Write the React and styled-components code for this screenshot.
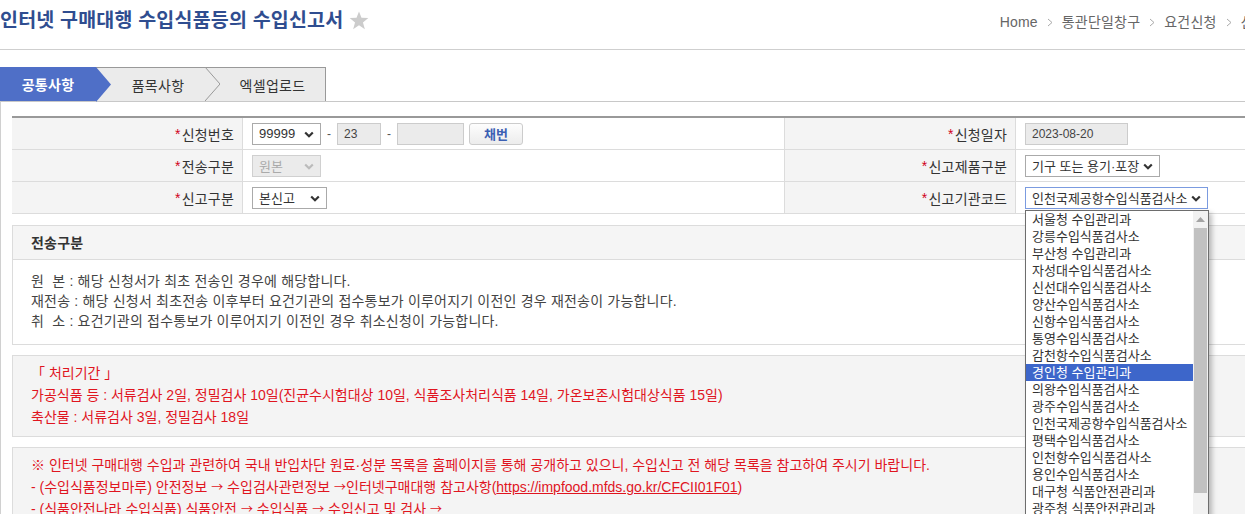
import React from "react";
import styled, { createGlobalStyle } from "styled-components";

const GlobalStyle = createGlobalStyle`
  html, body { margin: 0; padding: 0; background: #fff; overflow: hidden; }
  body {
    font-family: "Liberation Sans", "Noto Sans CJK KR", sans-serif;
    font-size: 14px;
    color: #333;
  }
  * { box-sizing: border-box; }
`;

const Page = styled.div`
  width: 1306px;
`;

const Header = styled.header`
  display: flex;
  justify-content: space-between;
  align-items: flex-start;
  height: 50px;
  border-bottom: 1px solid #cfcfcf;
`;

const Title = styled.h1`
  display: flex;
  align-items: center;
  gap: 6px;
  margin: 0;
  padding-top: 8px;
  font-size: 19.5px;
  line-height: 24px;
  font-weight: 700;
  letter-spacing: 0.2px;
  color: #2f4d90;
`;

const Breadcrumb = styled.nav`
  display: flex;
  align-items: center;
  gap: 9px;
  padding-top: 13px;
  line-height: 18px;
  font-size: 14px;
  letter-spacing: 0.2px;
  color: #666;
  white-space: nowrap;
`;

const TabBar = styled.div`
  display: flex;
  margin-top: 17px;
  width: 326px;
  height: 34px;
  background: #ebebeb;
  border-top: 1px solid #999;
  border-right: 1px solid #999;
`;

const Tab = styled.div`
  position: relative;
  display: flex;
  align-items: center;
  justify-content: center;
  width: ${(p) => p.$w}px;
  margin-top: ${(p) => (p.$active ? "-1px" : "0")};
  padding-left: ${(p) => p.$pl || 0}px;
  background: ${(p) => (p.$active ? "#4f6fc7" : "transparent")};
  color: ${(p) => (p.$active ? "#fff" : "#333")};
  font-weight: ${(p) => (p.$active ? 700 : 400)};
  font-size: 14px;
  letter-spacing: 0.3px;
`;

const TabArrow = styled.svg`
  position: absolute;
  top: ${(p) => (p.$active ? "0" : "-1px")};
  right: -15px;
  width: 15px;
  height: ${(p) => (p.$active ? "35px" : "34px")};
  z-index: 1;
`;

const Panel = styled.section`
  border-top: 1px solid #c8c8c8;
  border-left: 1px solid #d0d0d0;
  padding: 14px 0 40px 11px;
`;

const FormGrid = styled.div`
  display: grid;
  grid-template-columns: 231px 542px 231px 1fr;
  grid-auto-rows: 32px;
  border-top: 2px solid #999;
`;

const LabelCell = styled.div`
  display: flex;
  align-items: center;
  justify-content: flex-end;
  padding-right: 8px;
  background: #f4f4f4;
  border-bottom: 1px solid #dcdcdc;
  border-right: 1px solid #dcdcdc;
  color: #333;
  font-size: 14px;
  letter-spacing: 0.2px;
`;

const Req = styled.span`
  color: #d0021b;
  margin-right: 1px;
`;

const ValueCell = styled.div`
  position: relative;
  display: flex;
  align-items: center;
  gap: 6px;
  padding-left: 9px;
  border-bottom: 1px solid #dcdcdc;
  border-right: ${(p) => (p.$divider ? "1px solid #dcdcdc" : "none")};
`;

const SelectBox = styled.div`
  position: relative;
  display: flex;
  align-items: center;
  width: ${(p) => p.$w}px;
  height: 22px;
  padding: 0 20px 0 6px;
  border: 1px solid ${(p) => (p.$focus ? "#7b9be0" : p.$disabled ? "#d0d0d0" : "#aaa")};
  background: ${(p) => (p.$disabled ? "#ebebeb" : "#fff")};
  color: ${(p) => (p.$disabled ? "#aaa" : "#333")};
  font-size: 13px;
  white-space: nowrap;
`;

const Caret = styled.svg`
  position: absolute;
  right: 6px;
  top: 7px;
  width: 10px;
  height: 7px;
`;

const TextInput = styled.div`
  display: flex;
  align-items: center;
  width: ${(p) => p.$w}px;
  height: 22px;
  padding: 0 6px;
  border: 1px solid #ccc;
  background: #ebebeb;
  color: #444;
  font-size: 12px;
`;

const Dash = styled.span`
  width: 4px;
  color: #555;
  font-size: 12px;
`;

const Button = styled.button`
  width: 54px;
  height: 22px;
  margin-left: -1px;
  border: 1px solid #ccc;
  border-radius: 3px;
  background: linear-gradient(#fdfdfd, #ececec);
  color: #3b5fb3;
  font-family: inherit;
  font-size: 13px;
  font-weight: 700;
  padding: 0;
`;

const DropList = styled.ul`
  position: absolute;
  top: 28px;
  left: 9px;
  width: 184px;
  margin: 0;
  padding: 0 15px 0 0;
  list-style: none;
  background: #fff;
  border: 1px solid #6d6d6d;
  box-shadow: 3px 3px 5px rgba(0, 0, 0, 0.25);
  z-index: 10;
`;

const DropItem = styled.li`
  height: 17px;
  line-height: 17px;
  padding-left: 6px;
  font-size: 13px;
  white-space: nowrap;
  overflow: hidden;
  background: ${(p) => (p.$sel ? "#3d66ca" : "transparent")};
  color: ${(p) => (p.$sel ? "#fff" : "#333")};
`;

const ScrollTrack = styled.div`
  position: absolute;
  top: 0;
  right: 0;
  bottom: 0;
  width: 15px;
  background: #f1f1f1;
`;

const ScrollThumb = styled.div`
  position: absolute;
  top: 17px;
  left: 1px;
  width: 13px;
  height: 265px;
  background: #c1c1c1;
`;

const ScrollUp = styled.svg`
  position: absolute;
  top: 6px;
  left: 3px;
  width: 9px;
  height: 5px;
`;

const InfoBox = styled.div`
  margin-top: ${(p) => (p.$gray ? "10px" : "11px")};
  border: 1px solid #dcdcdc;
  background: ${(p) => (p.$gray ? "#f4f4f4" : "#fff")};
  padding: ${(p) => (p.$gray ? "6px 18px 8px" : "0")};
  color: ${(p) => (p.$gray ? "#e0151f" : "#444")};
  line-height: ${(p) => (p.$gray ? "22px" : "20px")};
  font-size: 14px;
  letter-spacing: ${(p) => (p.$gray ? "0" : "0.2px")};
`;

const BoxHead = styled.div`
  height: 34px;
  line-height: 34px;
  padding-left: 18px;
  background: #f5f5f5;
  border-bottom: 1px solid #dcdcdc;
  color: #333;
  font-weight: 700;
`;

const BoxBody = styled.div`
  padding: 11px 18px 13px;
`;

const Line = styled.div`
  white-space: nowrap;
`;

const Arrow = styled.span`
  font-family: "Noto Sans CJK KR", sans-serif;
  font-size: 12px;
`;

const Link = styled.a`
  color: inherit;
  text-decoration: underline;
`;

const Chevron = () => (
  <svg width="6" height="9" viewBox="0 0 6 9">
    <polyline points="1,1 5,4.5 1,8" fill="none" stroke="#aaa" strokeWidth="1" />
  </svg>
);

const CaretIcon = ({ color = "#333" }) => (
  <Caret viewBox="0 0 10 7">
    <polyline points="1.2,1.5 5,5.2 8.8,1.5" fill="none" stroke={color} strokeWidth="2.2" />
  </Caret>
);

const Select = ({ w, children, disabled, focus }) => (
  <SelectBox $w={w} $disabled={disabled} $focus={focus}>
    {children}
    <CaretIcon color={disabled ? "#bbb" : "#333"} />
  </SelectBox>
);

const offices = [
  "서울청 수입관리과",
  "강릉수입식품검사소",
  "부산청 수입관리과",
  "자성대수입식품검사소",
  "신선대수입식품검사소",
  "양산수입식품검사소",
  "신항수입식품검사소",
  "통영수입식품검사소",
  "감천항수입식품검사소",
  "경인청 수입관리과",
  "의왕수입식품검사소",
  "광주수입식품검사소",
  "인천국제공항수입식품검사소",
  "평택수입식품검사소",
  "인천항수입식품검사소",
  "용인수입식품검사소",
  "대구청 식품안전관리과",
  "광주청 식품안전관리과",
  "대전청 식품안전관리과",
  "여수수입식품검사소",
];

export default function App() {
  return (
    <Page>
      <GlobalStyle />
      <Header>
        <Title>
          인터넷 구매대행 수입식품등의 수입신고서
          <svg width="20" height="19" viewBox="0 0 24 23">
            <polygon
              points="12,0.5 15,8.2 23.3,8.6 16.8,13.8 19.1,22 12,17.3 4.9,22 7.2,13.8 0.7,8.6 9,8.2"
              fill="#cccccc"
            />
          </svg>
        </Title>
        <Breadcrumb>
          <span>Home</span>
          <Chevron />
          <span>통관단일창구</span>
          <Chevron />
          <span>요건신청</span>
          <Chevron />
          <span>신청서작성</span>
        </Breadcrumb>
      </Header>

      <TabBar>
        <Tab $w={96} $active>
          공통사항
          <TabArrow $active viewBox="0 0 15 35" preserveAspectRatio="none">
            <polygon points="0,0 15,17.5 0,35" fill="#4f6fc7" />
          </TabArrow>
        </Tab>
        <Tab $w={109} $pl={15}>
          품목사항
          <TabArrow viewBox="0 0 15 34" preserveAspectRatio="none">
            <polyline points="0,0 15,17 0,34" fill="#ebebeb" stroke="#999" strokeWidth="1" />
          </TabArrow>
        </Tab>
        <Tab $w={120} $pl={15}>
          엑셀업로드
        </Tab>
      </TabBar>

      <Panel>
        <FormGrid>
          <LabelCell>
            <Req>*</Req>신청번호
          </LabelCell>
          <ValueCell $divider>
            <Select w={69}>99999</Select>
            <Dash>-</Dash>
            <TextInput $w={44}>23</TextInput>
            <Dash>-</Dash>
            <TextInput $w={67} />
            <Button>채번</Button>
          </ValueCell>
          <LabelCell>
            <Req>*</Req>신청일자
          </LabelCell>
          <ValueCell>
            <TextInput $w={103}>2023-08-20</TextInput>
          </ValueCell>

          <LabelCell>
            <Req>*</Req>전송구분
          </LabelCell>
          <ValueCell $divider>
            <Select w={69} disabled>
              원본
            </Select>
          </ValueCell>
          <LabelCell>
            <Req>*</Req>신고제품구분
          </LabelCell>
          <ValueCell>
            <Select w={135}>기구 또는 용기·포장</Select>
          </ValueCell>

          <LabelCell>
            <Req>*</Req>신고구분
          </LabelCell>
          <ValueCell $divider>
            <Select w={75}>본신고</Select>
          </ValueCell>
          <LabelCell>
            <Req>*</Req>신고기관코드
          </LabelCell>
          <ValueCell>
            <Select w={183} focus>
              인천국제공항수입식품검사소
            </Select>
            <DropList>
              {offices.map((o) => (
                <DropItem key={o} $sel={o === "경인청 수입관리과"}>
                  {o}
                </DropItem>
              ))}
              <ScrollTrack>
                <ScrollUp viewBox="0 0 9 5">
                  <polygon points="0,5 4.5,0 9,5" fill="#a3a3a3" />
                </ScrollUp>
                <ScrollThumb />
              </ScrollTrack>
            </DropList>
          </ValueCell>
        </FormGrid>

        <InfoBox>
          <BoxHead>전송구분</BoxHead>
          <BoxBody>
            <Line>원&nbsp;&nbsp;본 : 해당 신청서가 최초 전송인 경우에 해당합니다.</Line>
            <Line>
              재전송 : 해당 신청서 최초전송 이후부터 요건기관의 접수통보가 이루어지기 이전인 경우
              재전송이 가능합니다.
            </Line>
            <Line>취&nbsp;&nbsp;소 : 요건기관의 접수통보가 이루어지기 이전인 경우 취소신청이 가능합니다.</Line>
          </BoxBody>
        </InfoBox>

        <InfoBox $gray>
          <Line>「 처리기간 」</Line>
          <Line>
            가공식품 등 : 서류검사 2일, 정밀검사 10일(진균수시험대상 10일, 식품조사처리식품 14일,
            가온보존시험대상식품 15일)
          </Line>
          <Line>축산물 : 서류검사 3일, 정밀검사 18일</Line>
        </InfoBox>

        <InfoBox $gray>
          <Line>
            ※ 인터넷 구매대행 수입과 관련하여 국내 반입차단 원료·성분 목록을 홈페이지를 통해
            공개하고 있으니, 수입신고 전 해당 목록을 참고하여 주시기 바랍니다.
          </Line>
          <Line>
            - (수입식품정보마루) 안전정보 <Arrow>→</Arrow> 수입검사관련정보 <Arrow>→</Arrow>
            인터넷구매대행 참고사항(
            <Link href="#">https://impfood.mfds.go.kr/CFCII01F01</Link>)
          </Line>
          <Line>
            - (식품안전나라 수입식품) 식품안전 <Arrow>→</Arrow> 수입식품 <Arrow>→</Arrow> 수입신고 및
            검사 <Arrow>→</Arrow>
          </Line>
        </InfoBox>
      </Panel>
    </Page>
  );
}
